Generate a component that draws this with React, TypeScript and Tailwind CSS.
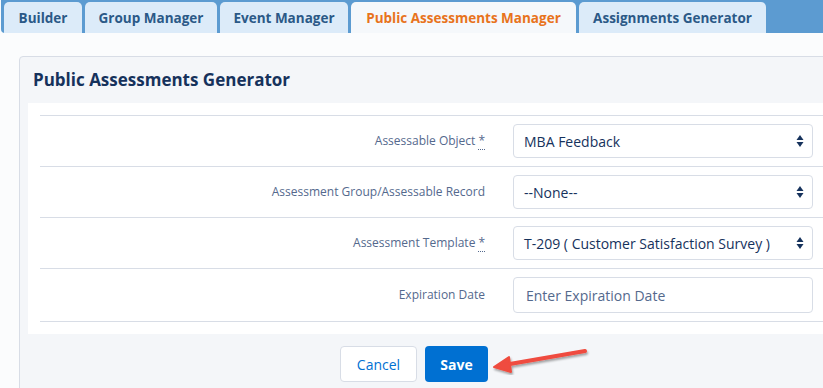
import React from 'react';

const tabs = [
  { label: 'Builder', w: 'w-[78px]' },
  { label: 'Group Manager', w: 'w-[132px]' },
  { label: 'Event Manager', w: 'w-[128px]' },
  { label: 'Public Assessments Manager', w: 'w-[225px]', active: true },
  { label: 'Assignments Generator', w: 'w-[187px]' },
];

const Required = () => (
  <abbr className="ml-[3px] text-[#54698d] no-underline border-b border-dotted border-[#54698d] leading-[10px]" title="required">
    *
  </abbr>
);

const SelectArrows = () => (
  <svg width="8" height="14" viewBox="0 0 8 14" className="absolute right-[8px] top-1/2 -translate-y-1/2">
    <path d="M4 1 L7.5 6 L0.5 6 Z" fill="#16325c" />
    <path d="M4 13 L7.5 8 L0.5 8 Z" fill="#16325c" />
  </svg>
);

const FakeSelect = ({ value }: { value: string }) => (
  <div className="relative h-[34px] w-[300px] rounded-[4px] border border-[#d8dde6] bg-white pl-[10px] flex items-center text-[14px] text-[#16325c]">
    {value}
    <SelectArrows />
  </div>
);

const rows: { label: string; required?: boolean; value: string; input?: boolean }[] = [
  { label: 'Assessable Object', required: true, value: 'MBA Feedback' },
  { label: 'Assessment Group/Assessable Record', value: '--None--' },
  { label: 'Assessment Template', required: true, value: 'T-209 ( Customer Satisfaction Survey )' },
  { label: 'Expiration Date', value: 'Enter Expiration Date', input: true },
];

const App = () => {
  return (
    <div className="relative w-[823px] h-[388px] overflow-hidden bg-[#fbfcfd]" style={{ fontFamily: '"Open Sans", Lato, sans-serif' }}>
      {/* Tab strip */}
      <div className="flex items-end gap-[3px] h-[33px] bg-[#5c9bd1] pl-[3px] pt-[2px] rounded-bl-[4px] ml-[1px]">
        {tabs.map((t) => (
          <div
            key={t.label}
            className={`${t.w} h-[31px] shrink-0 rounded-t-[5px] flex items-center justify-center pt-[1px] text-[13.5px] font-bold ${
              t.active ? 'bg-[#f5f8fb] text-[#e8731c]' : 'bg-[#dcebf9] text-[#2b5987]'
            }`}
          >
            {t.label}
          </div>
        ))}
      </div>

      {/* Card */}
      <div className="ml-[19px] mt-[23px] w-[820px] rounded-[4px] border border-[#d8dde6] bg-[#f4f6f9]">
        <div className="h-[46px] flex items-center pl-[13px] text-[17px] font-bold text-[#16325c]">
          Public Assessments Generator
        </div>
        <div className="ml-[8px] bg-white px-[12px] py-[12px]">
          <div className="border-t border-[#d8dde6]">
            {rows.map((r) => (
              <div key={r.label} className="flex items-center py-[8px] border-b border-[#d8dde6]">
                <div className="w-[473px] shrink-0 pr-[28px] text-right text-[12px] text-[#54698d]">
                  {r.label}
                  {r.required && <Required />}
                </div>
                {r.input ? (
                  <div className="h-[36px] w-[300px] rounded-[4px] border border-[#d8dde6] bg-white pl-[12px] flex items-center text-[14px] text-[#54698d]">
                    {r.value}
                  </div>
                ) : (
                  <FakeSelect value={r.value} />
                )}
              </div>
            ))}
          </div>
        </div>
        <div className="flex gap-[8px] pl-[320px] pt-[12px] pb-[12px]">
          <button className="h-[36px] w-[77px] rounded-[4px] border border-[#d8dde6] bg-white text-[14px] text-[#0070d2]">
            Cancel
          </button>
          <button className="h-[36px] w-[63px] rounded-[4px] bg-[#0070d2] text-[14px] font-bold text-white">
            Save
          </button>
        </div>
      </div>

      {/* Red annotation arrow */}
      <svg className="absolute left-[490px] top-[345px]" width="100" height="30" viewBox="0 0 100 30">
        <defs>
          <filter id="sh" x="-20%" y="-50%" width="140%" height="200%">
            <feDropShadow dx="1" dy="2" stdDeviation="1.2" floodColor="#000" floodOpacity="0.35" />
          </filter>
        </defs>
        <g filter="url(#sh)">
          <line x1="95" y1="6" x2="14" y2="20" stroke="#ef4c3f" strokeWidth="4" strokeLinecap="round" />
          <path d="M4 22 L19 12 L21 27 Z" fill="#ef4c3f" strokeLinejoin="round" stroke="#ef4c3f" strokeWidth="2" />
        </g>
      </svg>
    </div>
  );
};

export default App;
